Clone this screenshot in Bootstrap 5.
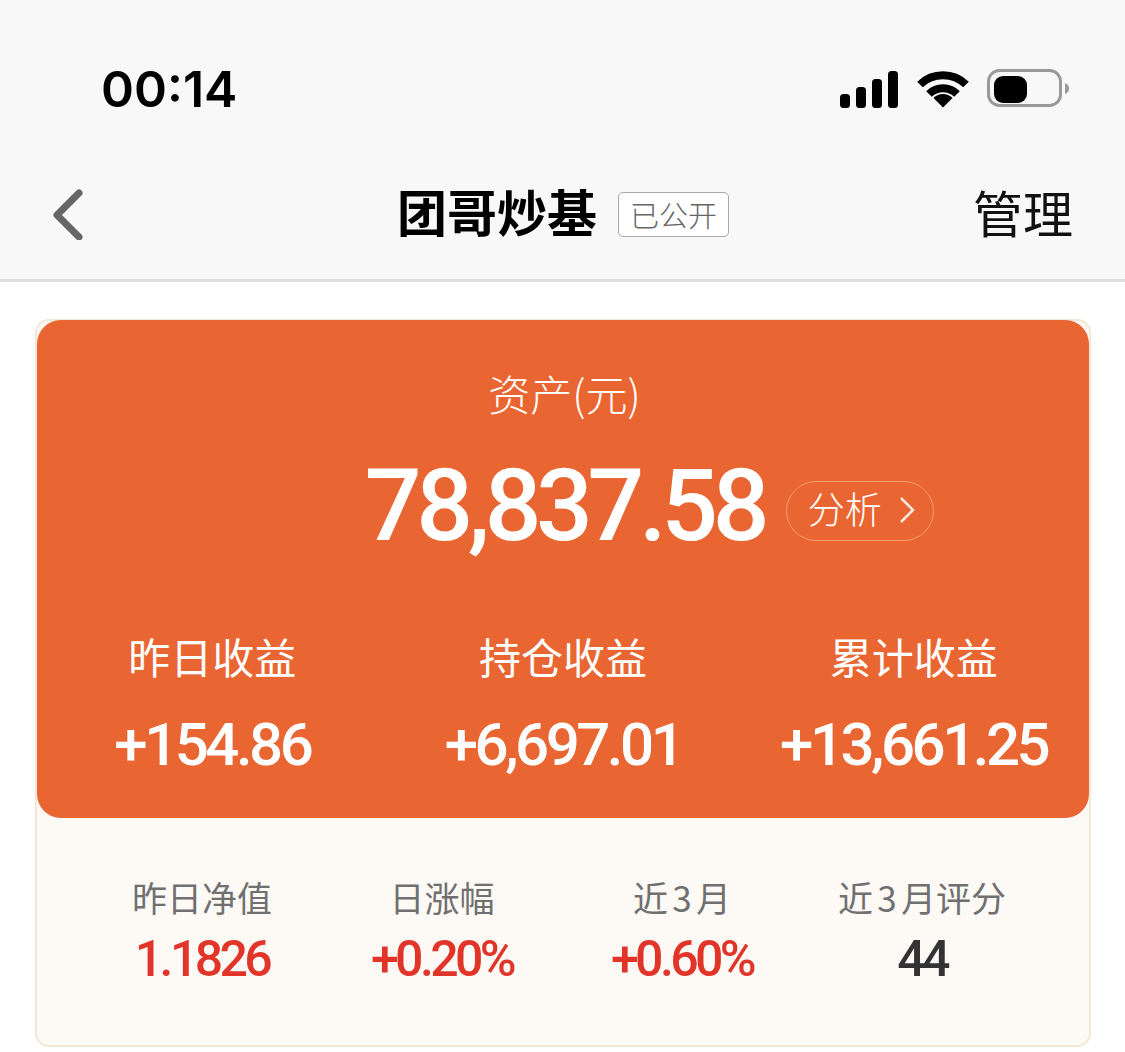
<!DOCTYPE html>
<html lang="zh-CN">
<head>
  <meta charset="UTF-8" />
  <meta name="viewport" content="width=device-width, initial-scale=1.0" />
  <title>团哥炒基</title>
  <link href="https://cdn.jsdelivr.net/npm/bootstrap@5.3.3/dist/css/bootstrap.min.css" rel="stylesheet">
  <style>
    body {
      font-family: Roboto, "Noto Sans CJK SC", sans-serif;
      background: #fff;
      height: 1052px;
      overflow: hidden;
    }
    .top-area {
      background: #f8f8f8;
      border-bottom: 3px solid #dedede;
      height: 282px;
    }
    .status-row {
      height: 162px;
      padding: 16px 55px 0 101px;
    }
    .clock {
      font-family: Inter, sans-serif;
      font-size: 50px;
      font-weight: 600;
      color: #000;
      line-height: 1;
    }
    .wifi-icon {
      margin-left: 19px;
    }
    .battery-icon {
      margin-left: 18px;
    }
    .title-row {
      display: grid;
      grid-template-columns: 1fr auto 1fr;
      padding: 0 52px 0 53px;
      height: 104px;
    }
    .page-title {
      font-family: "Noto Sans CJK SC", sans-serif;
      font-size: 50px;
      font-weight: 700;
      color: #000;
      line-height: 1;
      margin-bottom: 8px;
    }
    .public-tag {
      font-family: "Noto Sans CJK SC", sans-serif;
      font-size: 29px;
      font-weight: 300;
      color: #666;
      border: 1px solid #a8a8a8;
      border-radius: 5px;
      background: #fff;
      width: 111px;
      height: 45px;
      line-height: 1;
      margin-left: 21px;
    }
    .manage-link {
      font-family: "Noto Sans CJK SC", sans-serif;
      font-size: 50px;
      color: #111;
      line-height: 1;
      margin-bottom: 6px;
    }
    .fund-box {
      margin: 37px 34px 0 35px;
      height: 728px;
      background: #fdfaf6;
      border: 2px solid #f3e8d6;
      border-radius: 14px;
    }
    .orange-panel {
      background: #e96632;
      color: #fff;
      height: 498px;
      margin-top: -1px;
      border-radius: 24px;
    }
    .asset-label {
      font-family: "Noto Sans CJK SC", sans-serif;
      font-size: 42px;
      font-weight: 300;
      line-height: 1;
      padding-top: 52px;
      padding-left: 3px;
    }
    .amount-row {
      display: grid;
      grid-template-columns: 1fr auto 1fr;
      margin-top: 37px;
    }
    .amount {
      font-size: 100px;
      font-weight: 500;
      letter-spacing: -5.4px;
      line-height: 110px;
      margin-left: 3px;
    }
    .analyse-pill {
      font-family: "Noto Sans CJK SC", sans-serif;
      font-size: 37px;
      font-weight: 300;
      line-height: 1;
      width: 148px;
      height: 60px;
      margin-left: 22px;
      margin-top: 30px;
      border: 1px solid #f39a70;
      border-radius: 30px;
    }
    .pill-text {
      margin-bottom: 5px;
      margin-left: 2px;
    }
    .pill-arrow {
      margin-left: 17px;
      margin-bottom: 2px;
    }
    .gain-row {
      margin-top: 74px;
    }
    .gain-label {
      font-family: "Noto Sans CJK SC", sans-serif;
      font-size: 42px;
      font-weight: 400;
      line-height: 1;
    }
    .gain-value {
      font-size: 60px;
      font-weight: 500;
      letter-spacing: -3.5px;
      line-height: 1;
      margin-top: 38px;
    }
    .stats-row {
      display: grid;
      grid-template-columns: repeat(4, 240px);
      padding: 61px 0 0 45px;
    }
    .stat-label {
      font-family: "Noto Sans CJK SC", sans-serif;
      font-size: 35px;
      color: #707070;
      line-height: 1;
      font-weight: 400;
      word-spacing: -3.5px;
    }
    .stat-value {
      font-size: 50px;
      font-weight: 500;
      letter-spacing: -3.6px;
      line-height: 1;
      margin-top: 20px;
      color: #e2352a;
    }
    .stat-value.plain {
      color: #333;
    }
  </style>
</head>
<body>
  <div class="top-area">
    <div class="status-row d-flex justify-content-between align-items-center">
      <div class="clock">00:14</div>
      <div class="d-flex align-items-center">
        <svg width="58" height="37" viewBox="0 0 58 37">
          <rect x="0" y="23" width="10" height="14" rx="3.5" />
          <rect x="16" y="16" width="10" height="21" rx="3.5" />
          <rect x="32" y="8" width="10" height="29" rx="3.5" />
          <rect x="48" y="0" width="10" height="37" rx="3.5" />
        </svg>
        <svg class="wifi-icon" width="52" height="38" viewBox="0 0 52 38">
          <path d="M3 14.5 A33 33 0 0 1 49 14.5" fill="none" stroke="#000" stroke-width="8" />
          <path d="M12 24 A20 20 0 0 1 40 24" fill="none" stroke="#000" stroke-width="8" />
          <path d="M26 37.5 L16.500 28 A13.500 13.500 0 0 1 35.500 28 Z" />
        </svg>
        <svg class="battery-icon" width="83" height="40" viewBox="0 0 83 40">
          <rect x="1.500" y="1.500" width="72" height="35" rx="11" fill="none" stroke="#999" stroke-width="3" />
          <rect x="7" y="7" width="33" height="27" rx="9" />
          <path d="M78 14 C81 15 82 17 82 19.500 C82 22 81 24 78 25 Z" fill="#999" />
        </svg>
      </div>
    </div>
    <div class="title-row align-items-center">
      <div>
        <svg class="d-block" width="31" height="52" viewBox="0 0 31 52">
          <path d="M26 5 L4 27 L26 49" fill="none" stroke="#666" stroke-width="7" stroke-linecap="round" stroke-linejoin="round" />
        </svg>
      </div>
      <div class="d-flex align-items-center">
        <span class="page-title">团哥炒基</span>
        <span class="public-tag d-flex align-items-center justify-content-center">已公开</span>
      </div>
      <div class="text-end manage-link">管理</div>
    </div>
  </div>

  <div class="fund-box">
    <div class="orange-panel">
      <div class="asset-label text-center">资产(元)</div>
      <div class="amount-row">
        <div></div>
        <div class="amount">78,837.58</div>
        <div>
          <div class="analyse-pill d-flex align-items-center justify-content-center">
            <span class="pill-text">分析</span>
            <svg class="pill-arrow" width="16" height="28" viewBox="0 0 16 28">
              <path d="M2 2 L14 14 L2 26" fill="none" stroke="#fff" stroke-opacity=".85" stroke-width="2.500" />
            </svg>
          </div>
        </div>
      </div>
      <div class="row g-0 text-center gain-row">
        <div class="col-4">
          <div class="gain-label">昨日收益</div>
          <div class="gain-value">+154.86</div>
        </div>
        <div class="col-4">
          <div class="gain-label">持仓收益</div>
          <div class="gain-value">+6,697.01</div>
        </div>
        <div class="col-4">
          <div class="gain-label">累计收益</div>
          <div class="gain-value">+13,661.25</div>
        </div>
      </div>
    </div>
    <div class="stats-row text-center">
      <div>
        <div class="stat-label">昨日净值</div>
        <div class="stat-value">1.1826</div>
      </div>
      <div>
        <div class="stat-label">日涨幅</div>
        <div class="stat-value">+0.20%</div>
      </div>
      <div>
        <div class="stat-label">近 3 月</div>
        <div class="stat-value">+0.60%</div>
      </div>
      <div>
        <div class="stat-label">近 3 月评分</div>
        <div class="stat-value plain">44</div>
      </div>
    </div>
  </div>

  <script src="https://cdn.jsdelivr.net/npm/bootstrap@5.3.3/dist/js/bootstrap.bundle.min.js"></script>
</body>
</html>
